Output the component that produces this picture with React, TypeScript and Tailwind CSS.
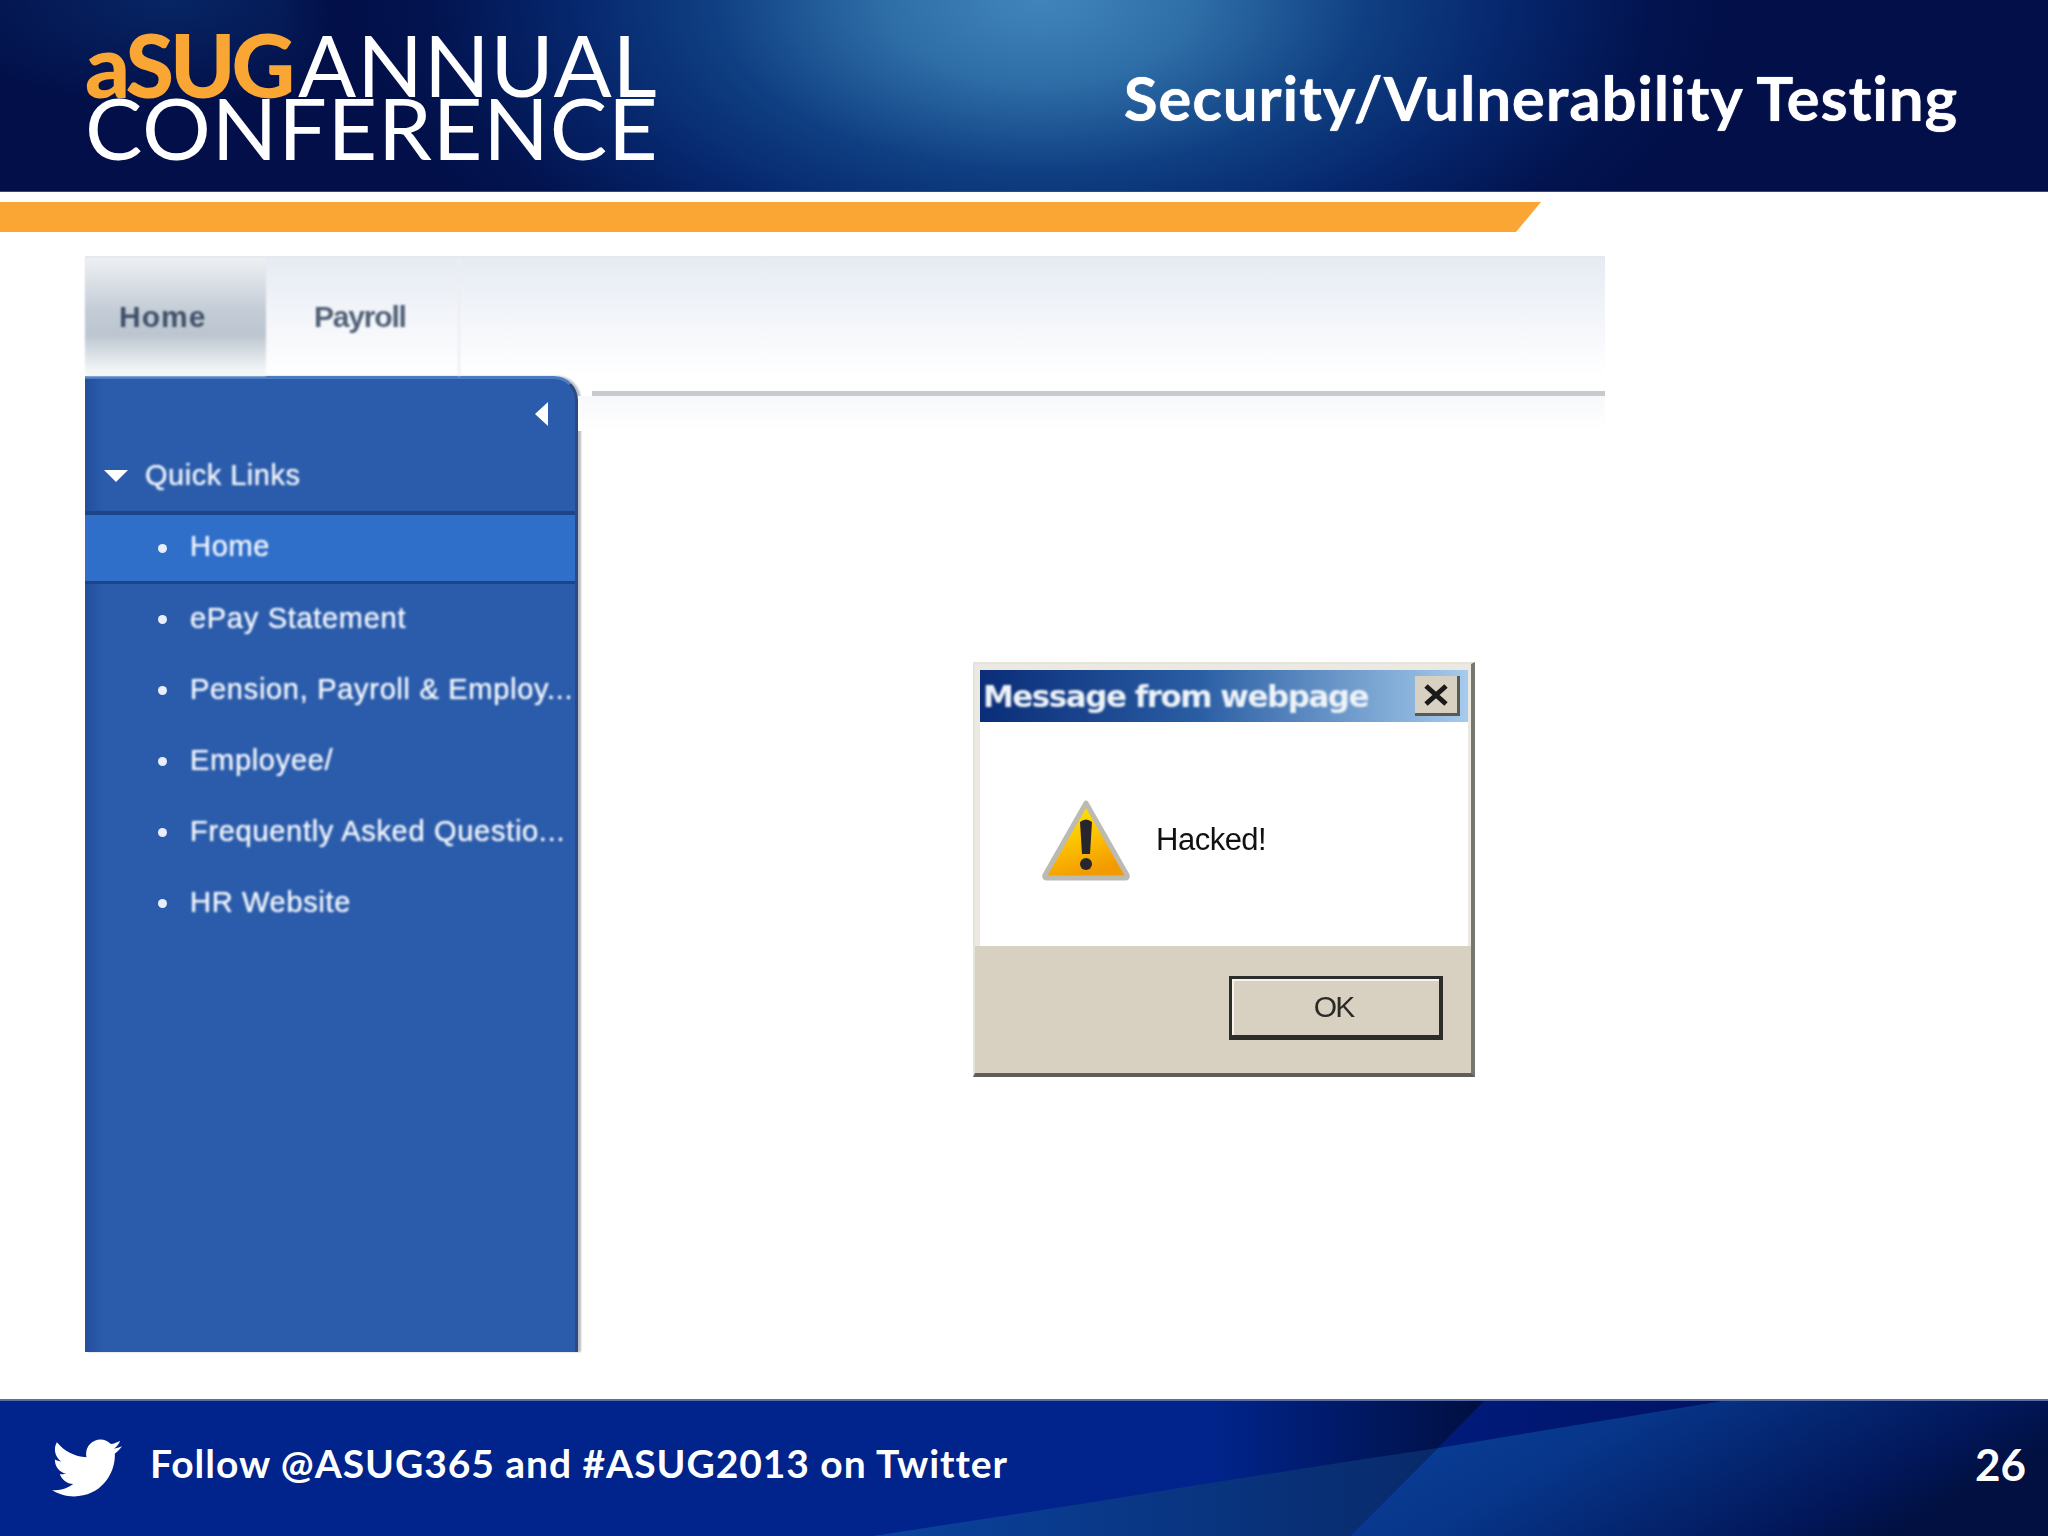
import React from "react";
import { FaTwitter } from "react-icons/fa";

const links = [
  "Home",
  "ePay Statement",
  "Pension, Payroll & Employ...",
  "Employee/",
  "Frequently Asked Questio...",
  "HR Website",
];

function Warning() {
  return (
    <svg width="92" height="84" viewBox="0 0 92 84" className="shrink-0 blur-[0.6px]">
      <defs>
        <linearGradient id="wg" x1="0" y1="0" x2="0.35" y2="1">
          <stop offset="0" stopColor="#ffef00" />
          <stop offset="0.55" stopColor="#fdc400" />
          <stop offset="1" stopColor="#f39a00" />
        </linearGradient>
      </defs>
      <path d="M46 5 L87 77 Q88 80 85 80 L7 80 Q4 80 5 77 Z" fill="url(#wg)" stroke="#bdbab2" strokeWidth="5" strokeLinejoin="round" />
      <path d="M40 24 Q46 19 52 24 L50 56 L42 56 Z" fill="#26262c" />
      <circle cx="46" cy="66" r="6" fill="#26262c" />
    </svg>
  );
}

export default function App() {
  return (
    <div className="relative flex h-[1536px] w-[2048px] flex-col overflow-hidden bg-white font-['Lato',sans-serif]">
      <header className="flex h-[192px] shrink-0 items-center justify-between border-b border-[#33468a] bg-[#020f48] bg-[radial-gradient(ellipse_760px_400px_at_1040px_0px,#4184bb_0%,#2f6fa8_20%,#0f3f82_43%,#06266c_62%,#021450_80%,#020f48_92%,transparent_100%),radial-gradient(ellipse_260px_110px_at_170px_0px,#072564_0%,transparent_100%)] pl-[85px] pr-[90px]">
        <div className="flex flex-col leading-none">
          <div className="flex h-[63px] items-center">
            <span className="w-[213px] text-[88px] font-black leading-none tracking-[-4px] text-[#faa634]">aSUG</span>
            <span className="text-[86px] leading-none tracking-[1px] text-white">ANNUAL</span>
          </div>
          <div className="flex h-[63px] items-center text-[86px] leading-none tracking-[0.8px] text-white">CONFERENCE</div>
        </div>
        <h1 className="pt-[2px] text-[62px] font-bold leading-none tracking-[0.75px] text-white [text-shadow:0_0_1px_#ffffff]">Security/Vulnerability Testing</h1>
      </header>

      <div className="mt-[10px] h-[30px] w-[1541px] shrink-0 bg-[#faa634] [clip-path:polygon(0_0,100%_0,1516px_100%,0_100%)]" />

      <main className="flex-1 pl-[85px] pt-[24px]">
        <div className="flex h-[1096px] w-[1520px] flex-col font-['Liberation_Sans',sans-serif]">
          <nav className="flex h-[120px] shrink-0 border-t-2 border-[#e6e8ec] bg-[linear-gradient(180deg,#e6ebf3_0%,#f4f6fa_55%,#ffffff_100%)]">
            <div className="flex w-[181px] items-center bg-[linear-gradient(180deg,#eef0f3_0%,#c3ccd6_45%,#bcc6d0_65%,#f3f5f7_95%)] pb-[2px] pl-[34px] text-[30px] font-bold tracking-[1px] text-[#3f5068] blur-[0.9px]">
              Home
            </div>
            <div className="flex w-[194px] items-center border-r-2 border-[#eceef2] pb-[2px] pl-[48px] text-[30px] font-bold tracking-[-1.2px] text-[#4f5f76] blur-[0.9px]">
              Payroll
            </div>
          </nav>

          <div className="flex flex-1">
            <aside className="flex w-[493px] shrink-0 flex-col rounded-tr-[24px] border-r-[3px] border-t-[3px] border-r-[#2a4a80] border-t-[#4a7cc2] bg-[linear-gradient(90deg,#234f9d_0px,#2b5cab_20px)] text-white shadow-[3px_0_2px_#b9bcc2]">
              <div className="flex h-[62px] shrink-0 items-start justify-end pr-[26px] pt-[22px]">
                <svg width="15" height="26" viewBox="0 0 15 26" className="blur-[0.5px]">
                  <path d="M14 1 L14 25 L1 13 Z" fill="#fff" />
                </svg>
              </div>
              <div className="flex h-[74px] shrink-0 items-center gap-[17px] border-b-[4px] border-[#1c4488] pl-[19px] text-[29px] tracking-[0.5px] text-[#f0f4fb]">
                <svg width="24" height="14" viewBox="0 0 24 14" className="blur-[0.4px]">
                  <path d="M0 1 L24 1 L12 13 Z" fill="#fff" />
                </svg>
                <span className="blur-[0.9px] [text-shadow:0_0_1px_#ffffff]">Quick Links</span>
              </div>
              {links.map((l, i) => (
                <div
                  key={l}
                  className={
                    i === 0
                      ? "flex h-[69px] shrink-0 items-center gap-[23px] border-b-[3px] border-[#1c4488] bg-[#2f6ec9] pl-[73px] text-[29px] tracking-[0.7px] text-[#f2f6fc]"
                      : "flex h-[71px] shrink-0 items-center gap-[23px] pl-[73px] text-[29px] tracking-[0.7px] text-[#f2f6fc]"
                  }
                >
                  <span className="h-[9px] w-[9px] shrink-0 rounded-full bg-[#e9effa]" />
                  <span className="-translate-y-[1px] whitespace-nowrap blur-[0.9px] [text-shadow:0_0_1px_#ffffff]">{l}</span>
                </div>
              ))}
            </aside>

            <section className="flex min-w-0 flex-1 flex-col">
              <div className="shrink-0 pl-[14px] pt-[15px]">
                <div className="h-[5px] bg-[#c8cacd]" />
              </div>
              <div className="h-[35px] shrink-0 bg-[linear-gradient(180deg,#f7f8fb,#ffffff)]" />
              <div className="ml-[395px] mt-[231px] flex h-[415px] w-[502px] flex-col border-b-[4px] border-l-[2px] border-r-[4px] border-t-[2px] border-b-[#5e5e5a] border-l-[#e6e3da] border-r-[#77766f] border-t-[#e6e3da] bg-[#ebe9e1]">
                <div className="ml-[5px] mr-[3px] mt-[6px] flex h-[52px] shrink-0 items-center justify-between bg-[linear-gradient(90deg,#0a2d78_0%,#2a5ea4_45%,#a6cbeb_100%)] pl-[3px] pr-[8px] font-['DejaVu_Sans',sans-serif]">
                  <span className="text-[31px] font-bold leading-none tracking-[-1.5px] text-[#eef3f8] blur-[0.8px]">Message from webpage</span>
                  <span className="flex h-[40px] w-[45px] items-center justify-center border-b-[3px] border-r-[3px] border-b-[#5a5a55] border-r-[#5a5a55] bg-[#d8d1c2]">
                    <svg width="26" height="22" viewBox="0 0 26 22" className="blur-[0.6px]">
                      <path d="M3 2 L23 20 M23 2 L3 20" stroke="#1a1a1a" strokeWidth="5" />
                    </svg>
                  </span>
                </div>
                <div className="ml-[5px] mr-[3px] flex h-[224px] shrink-0 items-start bg-white pl-[60px] pt-[76px]">
                  <Warning />
                  <span className="ml-[24px] mt-[26px] text-[31px] leading-none tracking-[-0.5px] text-[#111111] blur-[0.7px]">Hacked!</span>
                </div>
                <div className="flex flex-1 items-start justify-end bg-[#d8d1c2] pr-[28px] pt-[30px]">
                  <div className="flex h-[64px] w-[214px] items-center justify-center border-[3px] border-b-[5px] border-r-[4px] border-[#2c2c2a] bg-[#d8d1c2] pb-[2px] pr-[4px] text-[30px] tracking-[-2px] text-[#2a2a28] shadow-[inset_2px_2px_0_#f6f3ec]">
                    <span className="blur-[0.7px]">OK</span>
                  </div>
                </div>
              </div>
            </section>
          </div>
        </div>
      </main>

      <footer className="relative flex h-[137px] shrink-0 items-center justify-between overflow-hidden border-t-2 border-[#5b6ea8] bg-[#00248b] pl-[52px] pr-[22px]">
        <svg className="absolute inset-0" width="2048" height="137" viewBox="0 0 2048 137">
          <defs>
            <linearGradient id="f2" x1="0" x2="1" y1="0" y2="0">
              <stop offset="0" stopColor="#0a439f" />
              <stop offset="1" stopColor="#082a6a" />
            </linearGradient>
            <linearGradient id="f3" x1="0" x2="1" y1="0" y2="0.35">
              <stop offset="0" stopColor="#0b429e" />
              <stop offset="0.4" stopColor="#07368a" />
              <stop offset="0.85" stopColor="#02175a" />
              <stop offset="1" stopColor="#011040" />
            </linearGradient>
            <linearGradient id="f4" x1="0" x2="1" y1="0" y2="0">
              <stop offset="0" stopColor="#001b7c" />
              <stop offset="1" stopColor="#011363" />
            </linearGradient>
            <linearGradient id="f0" x1="0" x2="1" y1="0" y2="0">
              <stop offset="0" stopColor="#00248b" />
              <stop offset="0.3" stopColor="#00248b" />
              <stop offset="1" stopColor="#010f40" />
            </linearGradient>
          </defs>
          <rect x="1100" y="0" width="384" height="137" fill="url(#f0)" />
          <path d="M860 137 L1100 100 Q1270 72 1438 47 L1348 137 Z" fill="url(#f2)" />
          <path d="M1484 0 L1723 0 L1438 47 Z" fill="url(#f4)" />
          <path d="M1723 0 L2048 0 L2048 137 L1348 137 L1438 47 Z" fill="url(#f3)" />
        </svg>
        <div className="relative flex items-center gap-[28px] pb-[2px]">
          <FaTwitter className="h-[70px] w-[70px] text-white" />
          <span className="pb-[8px] text-[39px] font-bold leading-none tracking-[0.95px] text-white">Follow @ASUG365 and #ASUG2013 on Twitter</span>
        </div>
        <span className="relative pb-[10px] text-[44px] font-bold leading-none text-white">26</span>
      </footer>
    </div>
  );
}
